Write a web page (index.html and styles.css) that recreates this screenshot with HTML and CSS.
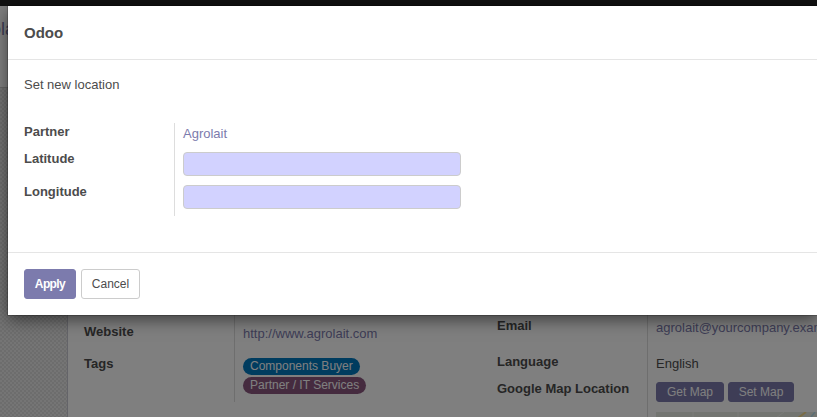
FILE: index.html
```html
<!DOCTYPE html>
<html lang="en">
<head>
<meta charset="utf-8">
<title>Odoo</title>
<link rel="stylesheet" href="styles.css">
</head>
<body>
<div class="page">
  <div class="navbar"></div>
  <div class="control-panel"><span class="crumb">Agrolait</span></div>
  <div class="content">
    <div class="sheet">
      <div class="group left">
        <div class="labels"><b class="l-website">Website</b><b class="l-tags">Tags</b></div>
        <div class="values">
          <a class="website">http://www.agrolait.com</a>
          <span class="tag blue">Components Buyer</span>
          <span class="tag plum">Partner / IT Services</span>
        </div>
      </div>
      <div class="group right">
        <div class="labels"><b class="l-email">Email</b><b class="l-lang">Language</b><b class="l-map">Google Map Location</b></div>
        <div class="values">
          <a class="email">agrolait@yourcompany.example.com</a>
          <span class="lang">English</span>
          <div class="map-buttons"><button class="get">Get Map</button><button class="set">Set Map</button></div>
          <svg class="map" width="161" height="20" viewBox="0 0 161 20"><rect width="161" height="20" fill="#e6ebe2"/><path d="M37 0v6M82 0v6M120 6l8-6" stroke="#f5f6f2" stroke-width="1" fill="none"/><path d="M142 6l8-6" stroke="#f5d98c" stroke-width="2"/><path d="M155 5l4-5" stroke="#b5dbea" stroke-width="1.5" fill="none"/></svg>
        </div>
      </div>
    </div>
  </div>
</div>
<div class="backdrop"></div>
<div class="modal">
  <div class="modal-header">Odoo</div>
  <div class="modal-body">
    <div class="intro">Set new location</div>
    <div class="form">
      <div class="form-labels"><b>Partner</b><b>Latitude</b><b>Longitude</b></div>
      <div class="form-values"><a>Agrolait</a><input type="text"><input type="text"></div>
    </div>
  </div>
  <div class="modal-footer"><button class="primary">Apply</button><button class="cancel">Cancel</button></div>
</div>
</body>
</html>
```
FILE: styles.css
```css
* { box-sizing: border-box; }
html { overflow: hidden; }
body { margin: 0; width: 817px; height: 417px; overflow: hidden; position: relative; font: 13px/20px "Liberation Sans", Arial, sans-serif; color: #4c4c4c; background: #fff; }
b { display: block; }
button { font: inherit; cursor: pointer; }
a { color: #7c7bad; }
.page { height: 417px; overflow: hidden; display: flex; flex-direction: column; }
.navbar { height: 6px; background: #222; flex: none; }
.control-panel { height: 82px; flex: none; border-bottom: 1px solid #cacaca; padding-top: 13px; overflow: hidden; }
.crumb { display: block; margin-left: -37px; font-size: 18px; color: #7c7bad; }
.content { flex: 1; min-height: 0; padding-left: 67px; overflow: hidden; background: repeating-conic-gradient(#dadada 0 25%, #eaeaea 0 50%) 0 0 / 4px 4px; }
.sheet { height: 329px; width: 750px; overflow: hidden; background: #fff; border-left: 1px solid #c8c8d3; display: flex; padding: 222px 0 0 16px; }
.group { display: flex; flex: none; }
.left { width: 413px; }
.labels { width: 150px; flex: none; }
.left .values { border-left: 1px solid #ddd; padding-left: 8px; height: 92px; display: flex; flex-direction: column; align-items: flex-start; }
.l-website { margin-top: 12px; }
.l-tags { margin-top: 12px; }
.website { margin-top: 14px; margin-bottom: 14px; }
.tag { height: 17px; line-height: 16px; font-size: 12px; padding: 0 7px; border-radius: 9px; color: #fff; margin-bottom: 2px; flex: none; }
.blue { background: #0078bf; }
.plum { background: #8a577f; }
.l-email { margin-top: 6px; }
.l-lang { margin-top: 16px; }
.l-map { margin-top: 7px; }
.right .values { border-left: 1px solid #ddd; padding-left: 8px; width: 170px; height: 120px; display: flex; flex-direction: column; overflow: hidden; }
.email { margin-top: 8px; }
.lang { margin-top: 16px; }
.map-buttons { display: flex; gap: 4px; margin-top: 8px; }
.map-buttons button { height: 20px; line-height: 18px; font-size: 12px; border: 1px solid #7c7bad; border-radius: 3px; color: #fff; background: #7c7bad; padding: 0; }
.get { width: 68px; }
.set { width: 66px; }
.map { margin-top: 10px; flex: none; }
.backdrop { position: absolute; inset: 0; background: rgba(0,0,0,.5); }
.modal { position: absolute; left: 8px; top: 6px; width: 809px; height: 309px; background: #fff; box-shadow: 0 5px 15px rgba(0,0,0,.5), 0 0 0 1px rgba(0,0,0,.2); display: flex; flex-direction: column; }
.modal-header { height: 54px; padding: 17px 16px; font-size: 15px; font-weight: bold; border-bottom: 1px solid #e5e5e5; flex: none; }
.modal-body { flex: 1; padding: 15px 16px; }
.form { display: flex; margin-top: 28px; }
.form-labels { width: 150px; }
.form-labels b { margin-bottom: 7px; }
.form-labels b:first-child { margin-top: -1px; }
.form-labels b:nth-child(2) { margin-bottom: 13px; }
.form-values { width: 287px; height: 93px; border-left: 1px solid #ddd; padding-left: 8px; display: flex; flex-direction: column; }
.form-values a { margin-top: 1px; margin-bottom: 8px; flex: none; }
.form-values input { width: 278px; height: 24px; flex: none; border: 1px solid #ccc; border-radius: 4px; background: #d2d2ff; margin: 0 0 9px; padding: 2px 4px; }
.modal-footer { height: 63px; flex: none; border-top: 1px solid #e5e5e5; padding: 16px; display: flex; gap: 5px; }
.modal-footer button { height: 30px; border: 1px solid #ccc; border-radius: 3px; background: #fff; color: #4c4c4c; font-size: 12px; padding: 0; }
.modal-footer .primary { width: 52px; background: #7c7bad; border-color: #7c7bad; color: #fff; font-weight: bold; letter-spacing: -.6px; }
.modal-footer .cancel { width: 59px; }
```
